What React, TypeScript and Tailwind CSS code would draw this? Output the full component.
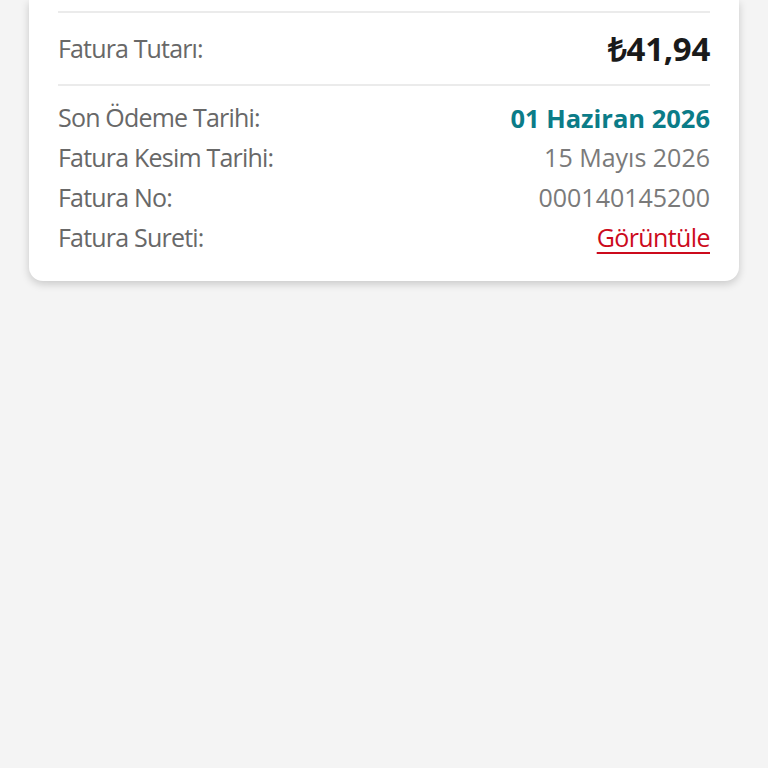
const rows = [
  { label: 'Son Ödeme Tarihi:', value: '01 Haziran 2026', kind: 'due' },
  { label: 'Fatura Kesim Tarihi:', value: '15 Mayıs 2026', kind: 'plain' },
  { label: 'Fatura No:', value: '000140145200', kind: 'plain' },
  { label: 'Fatura Sureti:', value: 'Görüntüle', kind: 'link' },
];

export default function App() {
  return (
    <div className="min-h-[768px] bg-[#f4f4f4] font-['Open_Sans',sans-serif]">
      <div className="mx-[29px] rounded-b-[14px] bg-white px-[29px] pt-[11px] pb-[23px] shadow-[0_3px_8px_rgba(0,0,0,0.18)]">
        <div className="border-t-2 border-[#ebebeb]" />
        <div className="flex h-[73px] items-center justify-between border-b-2 border-[#ebebeb]">
          <span className="text-[25px] tracking-[-0.85px] text-[#686868]">Fatura Tutarı:</span>
          <span className="text-[33px] font-bold tracking-[-0.3px] text-[#1a1a1a]">₺41,94</span>
        </div>
        <div className="pt-[12px]">
          {rows.map((r) => (
            <div key={r.label} className="flex h-[40px] items-center justify-between">
              <span className="text-[25px] tracking-[-0.8px] text-[#686868]">{r.label}</span>
              {r.kind === 'due' && (
                <span className="text-[25.5px] font-bold text-[#0b7c88]">{r.value}</span>
              )}
              {r.kind === 'plain' && (
                <span className="text-[25px] text-[#7a7a7a]">{r.value}</span>
              )}
              {r.kind === 'link' && (
                <a className="text-[25px] tracking-[-0.6px] text-[#cc0a1c] underline decoration-2 underline-offset-[5px]">
                  {r.value}
                </a>
              )}
            </div>
          ))}
        </div>
      </div>
    </div>
  );
}
